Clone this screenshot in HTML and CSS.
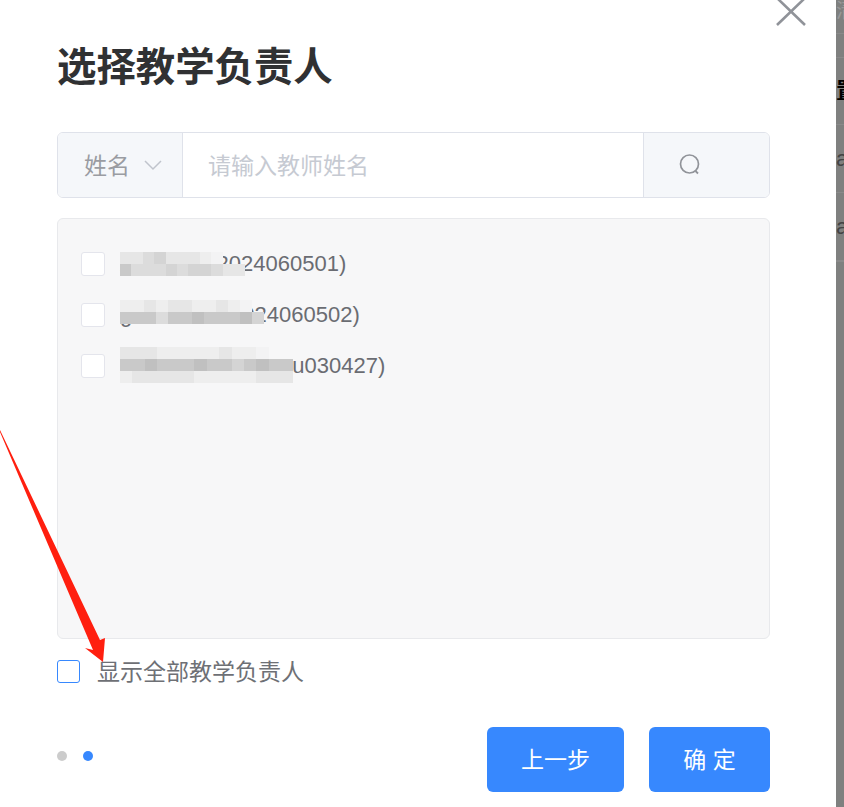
FILE: index.html
```html
<!DOCTYPE html>
<html lang="zh-CN">
<head>
<meta charset="utf-8">
<title>选择教学负责人</title>
<link rel="stylesheet" href="styles.css">
</head>
<body>
<div class="page">
  <main class="dialog">
    <button class="close" aria-label="关闭">
      <svg width="32" height="30" viewBox="0 0 32 30"><path d="M2 -2L30 25M30 -2L2 25" fill="none" stroke="#909399" stroke-width="2.6"/></svg>
    </button>
    <h1 class="title">选择教学负责人</h1>
    <div class="search">
      <div class="search-select">
        <span>姓名</span>
        <svg width="20" height="12" viewBox="0 0 20 12"><path d="M2 2L10 10L18 2" fill="none" stroke="#c0c4cc" stroke-width="1.5"/></svg>
      </div>
      <div class="search-input">请输入教师姓名</div>
      <div class="search-btn">
        <svg width="24" height="24" viewBox="0 0 24 24"><circle cx="11.5" cy="11" r="9" fill="none" stroke="#909399" stroke-width="1.7"/><path d="M17.5 18L20 20.5" fill="none" stroke="#909399" stroke-width="1.8"/></svg>
      </div>
    </div>
    <div class="panel">
      <label class="item">
        <span class="box"></span>
        <span class="name n1">xxxxxxxa(2024060501)
          <span class="mosaic m1">
            <i class="s5"></i><i class="s5"></i><i class="s4"></i><i class="s3"></i><i class="s5"></i><i class="s5"></i><i class="s5"></i><i class="s6"></i><i class="s7"></i><i></i><i></i>
            <i class="s2"></i><i class="s4"></i><i class="s4"></i><i class="s4"></i><i class="s3"></i><i class="s4"></i><i class="s3"></i><i class="s3"></i><i class="s4"></i><i class="s5"></i><i class="s5"></i>
          </span>
        </span>
      </label>
      <label class="item">
        <span class="box"></span>
        <span class="name n2">gxxxxxxaa(2024060502)
          <span class="mosaic m2">
            <i class="s6"></i><i class="s6"></i><i class="s5"></i><i class="s6"></i><i class="s5"></i><i class="s5"></i><i class="s6"></i><i class="s6"></i><i class="s5"></i><i class="s6"></i><i class="s7"></i><i></i>
            <i class="s2"></i><i class="s2"></i><i class="s2"></i><i class="s4"></i><i class="s2"></i><i class="s2"></i><i class="s1"></i><i class="s2"></i><i class="s2"></i><i class="s2"></i><i class="s1"></i><i class="s3"></i>
            <i></i><i class="s8"></i><i class="s8"></i><i class="s8"></i><i class="s8"></i><i class="s8"></i><i class="s8"></i><i class="s8"></i><i class="s8"></i><i class="s8"></i><i class="s8"></i><i class="s8"></i>
          </span>
        </span>
      </label>
      <label class="item">
        <span class="box"></span>
        <span class="name n3">xxxxxxxxxxxxxxxru030427)
          <span class="mosaic m3">
            <i class="s5"></i><i class="s5"></i><i class="s5"></i><i class="s6"></i><i class="s6"></i><i class="s6"></i><i class="s6"></i><i class="s6"></i><i class="s5"></i><i class="s6"></i><i class="s6"></i><i class="s7"></i><i></i><i></i>
            <i class="s2"></i><i class="s2"></i><i class="s1"></i><i class="s2"></i><i class="s2"></i><i class="s2"></i><i class="s1"></i><i class="s2"></i><i class="s2"></i><i class="s3"></i><i class="s2"></i><i class="s1"></i><i class="s2"></i><i class="s2"></i>
            <i class="s6"></i><i class="s5"></i><i class="s5"></i><i class="s5"></i><i class="s5"></i><i class="s5"></i><i class="s6"></i><i class="s6"></i><i class="s6"></i><i class="s6"></i><i class="s6"></i><i class="s5"></i><i class="s5"></i><i class="s5"></i>
          </span>
        </span>
      </label>
    </div>
    <label class="show-all">
      <span class="box box-active"></span>
      <span class="show-all-text">显示全部教学负责人</span>
    </label>
    <footer class="footer">
      <div class="dots"><span class="dot"></span><span class="dot dot-active"></span></div>
      <div class="actions">
        <button class="btn btn-prev"><span class="btn-text">上一步</span></button>
        <button class="btn btn-ok"><span class="btn-text">确 定</span></button>
      </div>
    </footer>
  </main>
  <aside class="backdrop">
    <div class="bd-row bd-r1">清</div>
    <div class="bd-row bd-r2"></div>
    <div class="bd-row bd-r3">置</div>
    <div class="bd-row bd-r4">a</div>
    <div class="bd-row bd-r4">a</div>
    <div class="bd-row"></div>
  </aside>
  <svg class="arrow" width="120" height="250" viewBox="0 420 120 250"><polygon points="0,430 100,640 105,638 103,662 85,648 93,650 0,432" fill="#ff1f0f"/></svg>
</div>
</body>
</html>
```
FILE: styles.css
```css
* { box-sizing: border-box; }
html, body { margin: 0; padding: 0; }
body {
  width: 844px;
  height: 807px;
  overflow: hidden;
  background: #fff;
  font-family: "Liberation Sans", "Noto Sans CJK SC", sans-serif;
}
.page { position: relative; display: flex; width: 844px; height: 807px; overflow: hidden; }
.dialog { position: relative; width: 836px; height: 807px; padding: 0 66px 0 57px; background: #fff; }
.close { position: absolute; left: 775px; top: 0; padding: 0; border: 0; background: none; line-height: 0; }
.title { margin: 0; padding-top: 42px; height: 132px; font-size: 39.4px; line-height: 50px; font-weight: 600; color: #303133; white-space: nowrap; }

.search { display: flex; height: 66px; border: 1px solid #dfe2ea; border-radius: 6px; overflow: hidden; }
.search-select { display: flex; align-items: center; gap: 13px; width: 125px; padding: 0 0 3px 26px; background: #f5f7fa; border-right: 1px solid #dfe2ea; font-size: 23px; color: #9a9ca2; }
.search-select svg { margin-top: 3px; }
.search-input { flex: 1; display: flex; align-items: center; padding: 0 0 3px 25px; font-size: 23px; color: #c6cad2; }
.search-btn { display: flex; align-items: center; width: 126px; padding-left: 34px; background: #f5f7fa; border-left: 1px solid #dfe2ea; }

.panel { height: 421px; margin-top: 20px; padding: 33px 23px 0; display: flex; flex-direction: column; gap: 27px; background: #f7f7f8; border: 1px solid #e8e9ec; border-radius: 6px; }
.item { display: flex; align-items: center; gap: 15px; height: 24px; font-size: 22px; color: #6a6c72; }
.box { flex: none; width: 24px; height: 24px; background: #fff; border: 1px solid #e4e5ec; border-radius: 3px; }
.name { position: relative; white-space: nowrap; line-height: 24px; }

.mosaic { position: absolute; display: grid; grid-auto-rows: 12px; filter: blur(0.5px); }
.mosaic i { display: block; }
.m1 { left: 0; top: 0; grid-template-columns: repeat(11, 11.4px); }
.m2 { left: 0; top: -3px; grid-template-columns: repeat(12, 12px); }
.m3 { left: 0; top: -7px; grid-template-columns: repeat(14, 12.4px); }
.s1 { background: #c0c0c0; }
.s2 { background: #c9c9c9; }
.s3 { background: #d4d4d4; }
.s4 { background: #dcdcdc; }
.s5 { background: #e6e6e6; }
.s6 { background: #eeeeee; }
.s7 { background: #f3f3f4; }
.mosaic .s8 { height: 5px; background: #f7f7f8; }

.show-all { display: flex; align-items: center; gap: 17px; height: 23px; margin-top: 21px; font-size: 23px; color: #6e7075; white-space: nowrap; }
.show-all-text { padding-bottom: 3px; }
.box-active { width: 23px; height: 23px; border-color: #3788fe; }

.footer { display: flex; align-items: center; justify-content: space-between; height: 65px; margin-top: 44px; }
.dots { display: flex; gap: 16px; margin-top: -7px; }
.dot { width: 10px; height: 10px; border-radius: 50%; background: #ccc; }
.dot-active { background: #3788fe; }
.actions { display: flex; gap: 25px; }
.btn { height: 65px; padding: 0 0 3px; border: 0; border-radius: 6px; background: #3788fe; color: #fff; font: inherit; font-size: 23px; }
.btn-prev { width: 137px; }
.btn-ok { width: 121px; }

.backdrop { width: 8px; height: 807px; background: #7f807f; overflow: hidden; }
.bd-row { overflow: hidden; border-bottom: 1px solid #8a8a8a; font-size: 22px; line-height: 34px; color: #444; }
.bd-r1 { height: 34px; color: #999; font-size: 20px; line-height: 22px; }
.bd-r2 { height: 24px; }
.bd-r3 { height: 67px; font-weight: 700; color: #000; line-height: 66px; margin-left: 0; }
.bd-r4 { height: 68px; line-height: 68px; }

.arrow { position: absolute; left: 0; top: 420px; }
```
